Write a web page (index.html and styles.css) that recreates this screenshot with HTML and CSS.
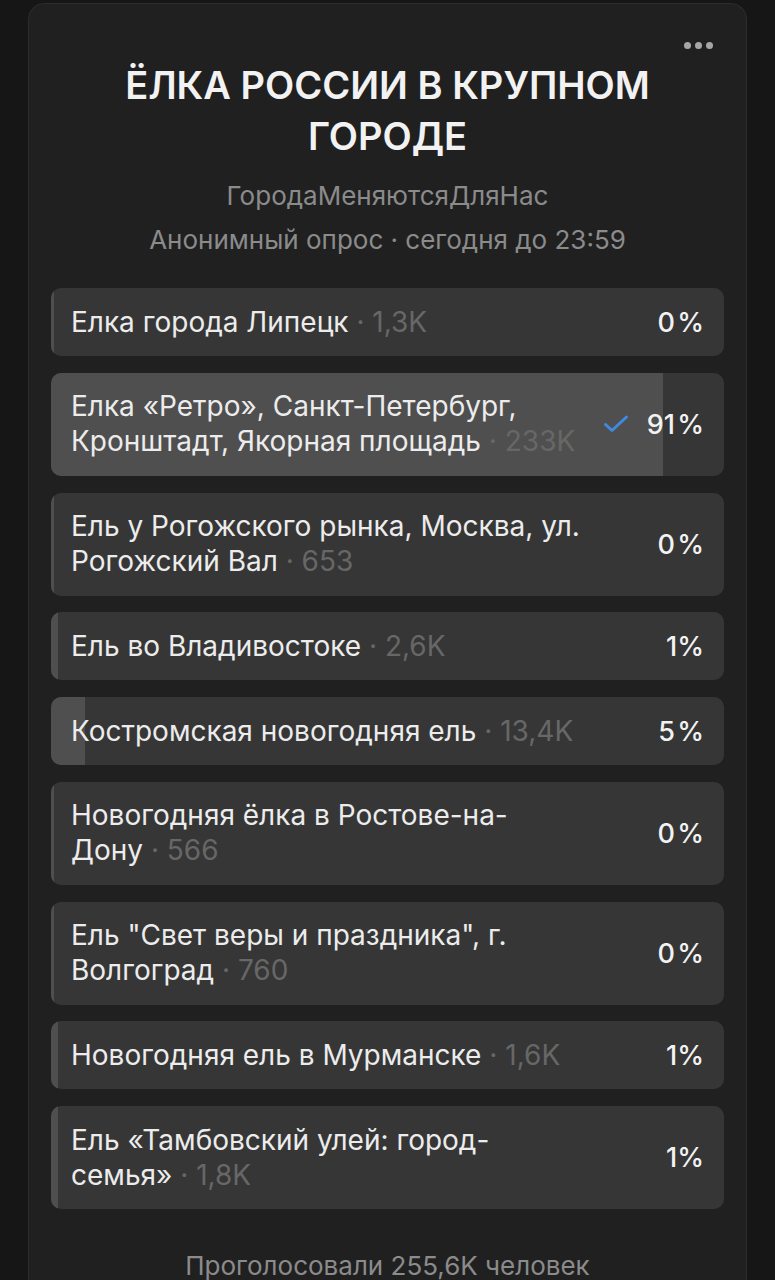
FILE: index.html
```html
<!DOCTYPE html>
<html lang="ru">
<head>
    <meta charset="UTF-8">
    <meta name="viewport" content="width=device-width, initial-scale=1.0">
    <title>Опрос</title>
    <link rel="stylesheet" href="styles.css">
</head>
<body>
    <div class="poll">
        <button class="poll-menu" aria-label="Меню">
            <span></span><span></span><span></span>
        </button>

        <header class="poll-head">
            <h1 class="poll-title">ЁЛКА РОССИИ В КРУПНОМ ГОРОДЕ</h1>
            <p class="poll-author">ГородаМеняютсяДляНас</p>
            <p class="poll-meta">Анонимный опрос · сегодня до 23:59</p>
        </header>

        <ul class="options">
            <li class="option">
                <div class="option-fill" style="width: 0%"></div>
                <span class="option-text">Елка города Липецк<span class="votes"> · 1,3K</span></span>
                <span class="result"><span class="percent">0&#8202;%</span></span>
            </li>
            <li class="option">
                <div class="option-fill" style="width: 91%"></div>
                <span class="option-text">Елка «Ретро», Санкт-Петербург, Кронштадт, Якорная площадь<span class="votes"> · 233K</span></span>
                <span class="result">
                    <svg class="check" viewBox="0 0 26 20" width="26" height="20">
                        <path d="M2.5 10.5l6.5 6L23.5 3" fill="none" stroke="#3f8ae0" stroke-width="3" stroke-linecap="round" stroke-linejoin="round"/>
                    </svg>
                    <span class="percent">91&#8202;%</span>
                </span>
            </li>
            <li class="option">
                <div class="option-fill" style="width: 0%"></div>
                <span class="option-text">Ель у Рогожского рынка, Москва, ул. Рогожский Вал<span class="votes"> · 653</span></span>
                <span class="result"><span class="percent">0&#8202;%</span></span>
            </li>
            <li class="option">
                <div class="option-fill" style="width: 1%"></div>
                <span class="option-text">Ель во Владивостоке<span class="votes"> · 2,6K</span></span>
                <span class="result"><span class="percent">1%</span></span>
            </li>
            <li class="option">
                <div class="option-fill" style="width: 5%"></div>
                <span class="option-text">Костромская новогодняя ель<span class="votes"> · 13,4K</span></span>
                <span class="result"><span class="percent">5&#8202;%</span></span>
            </li>
            <li class="option">
                <div class="option-fill" style="width: 0%"></div>
                <span class="option-text">Новогодняя ёлка в Ростове-на-<br>Дону<span class="votes"> · 566</span></span>
                <span class="result"><span class="percent">0&#8202;%</span></span>
            </li>
            <li class="option">
                <div class="option-fill" style="width: 0%"></div>
                <span class="option-text">Ель "Свет веры и праздника", г. Волгоград<span class="votes"> · 760</span></span>
                <span class="result"><span class="percent">0&#8202;%</span></span>
            </li>
            <li class="option">
                <div class="option-fill" style="width: 1%"></div>
                <span class="option-text">Новогодняя ель в Мурманске<span class="votes"> · 1,6K</span></span>
                <span class="result"><span class="percent">1%</span></span>
            </li>
            <li class="option">
                <div class="option-fill" style="width: 1%"></div>
                <span class="option-text">Ель «Тамбовский улей: город-семья»<span class="votes"> · 1,8K</span></span>
                <span class="result"><span class="percent">1%</span></span>
            </li>
        </ul>

        <p class="poll-total">Проголосовали 255,6K человек</p>
    </div>
</body>
</html>
```

FILE: styles.css
```css
/* Reset */
* {
    margin: 0;
    padding: 0;
    box-sizing: border-box;
}

body {
    font-family: Inter, Roboto, 'Noto Sans', sans-serif;
    background-color: #161616;
    color: #e9e9e9;
    overflow: hidden;
}

.poll {
    position: relative;
    margin: 3px 28px 0 28px;
    padding: 56px 22px 40px 22px;
    background-color: #202020;
    border: 1px solid #2c2c2c;
    border-radius: 16px;
    min-height: 1300px;
}

.poll-menu {
    position: absolute;
    top: 38px;
    right: 33px;
    display: flex;
    gap: 4px;
    background: none;
    border: none;
}

    .poll-menu span {
        width: 7px;
        height: 7px;
        border-radius: 50%;
        background-color: #a6a6a6;
    }

.poll-head {
    text-align: center;
    padding: 0 40px;
}

.poll-title {
    font-size: 38px;
    line-height: 51px;
    font-weight: 600;
    color: #f2f2f2;
}

.poll-author {
    margin-top: 17px;
    font-size: 26px;
    line-height: 34px;
    color: #8b8b8b;
}

.poll-meta {
    margin-top: 10px;
    font-size: 26px;
    line-height: 34px;
    color: #8b8b8b;
}

.options {
    list-style: none;
    margin-top: 31px;
    display: flex;
    flex-direction: column;
    gap: 16.75px;
}

.option {
    position: relative;
    display: flex;
    align-items: center;
    gap: 20px;
    padding: 16.5px 20px;
    background-color: #363636;
    border-radius: 10px;
    overflow: hidden;
}

.option-fill {
    position: absolute;
    left: 0;
    top: 0;
    bottom: 0;
    min-width: 3px;
    background-color: #4f4f4f;
}

.option-text {
    position: relative;
    flex: 1;
    font-size: 28px;
    line-height: 35px;
    color: #ececec;
}

.votes {
    color: #676767;
}

.result {
    position: relative;
    flex-shrink: 0;
    width: 104px;
    display: flex;
    align-items: center;
    justify-content: flex-end;
    gap: 18px;
}

.percent {
    font-size: 27px;
    line-height: 35px;
    font-weight: 500;
    color: #f2f2f2;
}

.poll-total {
    margin-top: 40px;
    text-align: center;
    font-size: 26px;
    line-height: 34px;
    color: #8b8b8b;
}
```
